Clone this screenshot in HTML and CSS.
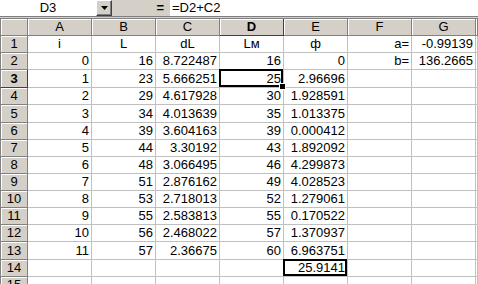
FILE: index.html
```html
<!DOCTYPE html>
<html>
<head>
<meta charset="utf-8">
<link rel="stylesheet" href="styles.css">
</head>
<body>
<div class="fbar">
  <div class="namebox">D3</div>
  <div class="drop"><svg width="7" height="4" viewBox="0 0 7 4"><path d="M0 0H7L3.5 4Z" fill="#000"/></svg></div>
  <div class="eqzone"><span class="eq">=</span></div>
  <div class="formula">=D2+C2</div>
</div>
<div class="sheet">
  <div class="corner"></div><div class="ch">A</div><div class="ch">B</div><div class="ch">C</div><div class="ch act">D</div><div class="ch">E</div><div class="ch">F</div><div class="ch">G</div><div class="ch"></div>

  <div class="rh">1</div><div class="c">i</div><div class="c">L</div><div class="c">dL</div><div class="c">Lм</div><div class="c">ф</div><div class="r">a=</div><div class="r">-0.99139</div><div></div>
  <div class="rh">2</div><div class="r">0</div><div class="r">16</div><div class="r">8.722487</div><div class="r">16</div><div class="r">0</div><div class="r">b=</div><div class="r">136.2665</div><div></div>
  <div class="rh act">3</div><div class="r">1</div><div class="r">23</div><div class="r">5.666251</div><div class="r sel">25</div><div class="r">2.96696</div><div></div><div></div><div></div>
  <div class="rh">4</div><div class="r">2</div><div class="r">29</div><div class="r">4.617928</div><div class="r">30</div><div class="r">1.928591</div><div></div><div></div><div></div>
  <div class="rh">5</div><div class="r">3</div><div class="r">34</div><div class="r">4.013639</div><div class="r">35</div><div class="r">1.013375</div><div></div><div></div><div></div>
  <div class="rh">6</div><div class="r">4</div><div class="r">39</div><div class="r">3.604163</div><div class="r">39</div><div class="r">0.000412</div><div></div><div></div><div></div>
  <div class="rh">7</div><div class="r">5</div><div class="r">44</div><div class="r">3.30192</div><div class="r">43</div><div class="r">1.892092</div><div></div><div></div><div></div>
  <div class="rh">8</div><div class="r">6</div><div class="r">48</div><div class="r">3.066495</div><div class="r">46</div><div class="r">4.299873</div><div></div><div></div><div></div>
  <div class="rh">9</div><div class="r">7</div><div class="r">51</div><div class="r">2.876162</div><div class="r">49</div><div class="r">4.028523</div><div></div><div></div><div></div>
  <div class="rh">10</div><div class="r">8</div><div class="r">53</div><div class="r">2.718013</div><div class="r">52</div><div class="r">1.279061</div><div></div><div></div><div></div>
  <div class="rh">11</div><div class="r">9</div><div class="r">55</div><div class="r">2.583813</div><div class="r">55</div><div class="r">0.170522</div><div></div><div></div><div></div>
  <div class="rh">12</div><div class="r">10</div><div class="r">56</div><div class="r">2.468022</div><div class="r">57</div><div class="r">1.370937</div><div></div><div></div><div></div>
  <div class="rh">13</div><div class="r">11</div><div class="r">57</div><div class="r">2.36675</div><div class="r">60</div><div class="r">6.963751</div><div></div><div></div><div></div>
  <div class="rh">14</div><div></div><div></div><div></div><div></div><div class="r box">25.9141</div><div></div><div></div><div></div>
  <div class="rh">15</div><div></div><div></div><div></div><div></div><div></div><div></div><div></div><div></div>
</div>
</body>
</html>
```
FILE: styles.css
```css
* { box-sizing: border-box; }
html, body { margin: 0; padding: 0; }
body {
  width: 478px;
  height: 284px;
  overflow: hidden;
  background: #d4d0c8;
  font-family: "Liberation Sans", Arial, sans-serif;
  font-size: 13px;
  color: #000;
}
.fbar {
  display: flex;
  height: 17px;
  border-bottom: 1px solid #808080;
}
.namebox {
  width: 96px;
  background: #fff;
  text-align: center;
  line-height: 16px;
}
.drop {
  width: 16px;
  background: #d4d0c8;
  border-top: 1px solid #fff;
  border-left: 1px solid #fff;
  border-right: 1px solid #404040;
  border-bottom: 1px solid #404040;
  box-shadow: inset -1px -1px 0 #808080;
  display: flex;
  align-items: center;
  justify-content: center;
}
.eqzone {
  width: 58px;
  display: flex;
  justify-content: flex-end;
  padding-right: 6px;
  line-height: 16px;
}
.eq { font-weight: bold; }
.formula {
  flex: 1;
  background: #fff;
  padding-left: 2px;
  line-height: 16px;
}
.sheet {
  margin-top: 1px;
  display: grid;
  grid-template-columns: 28px repeat(7, 64px) 1fr;
  grid-template-rows: 17px 17px 17px 18px 17px 18px 17px 17px 17px 17px 17px 17px 17px 18px 17px 17px;
  background: #fff;
  border-top: 1px solid #808080;
}
.sheet > div {
  border-right: 1px solid #c0c0c0;
  border-bottom: 1px solid #c0c0c0;
  line-height: 16px;
  white-space: nowrap;
  position: relative;
  display: flex;
  align-items: flex-end;
}
.sheet > .corner, .sheet > .ch, .sheet > .rh {
  background: #d4d0c8;
  border-right: 1px solid #808080;
  border-bottom: 1px solid #808080;
  box-shadow: inset 1px 1px 0 #fff;
  justify-content: center;
}
.sheet > .rh { border-left: 1px solid #808080; }
.sheet > .corner { border-left: 1px solid #808080; }
.act { font-weight: bold; }
.sheet > .ch.act, .sheet > .rh.act {
  border-right-color: #404040;
  border-bottom-color: #404040;
}
.sheet > .r { justify-content: flex-end; padding-right: 2px; }
.sheet > .c { justify-content: center; }
.sel::after, .box::after {
  content: "";
  position: absolute;
  left: -1px;
  top: -1px;
  right: 0;
  bottom: 0;
  border: 2px solid #000;
  pointer-events: none;
}
.sel::before {
  content: "";
  position: absolute;
  right: -2px;
  bottom: -2px;
  width: 5px;
  height: 5px;
  background: #000;
  outline: 1px solid #fff;
  z-index: 2;
}
```
